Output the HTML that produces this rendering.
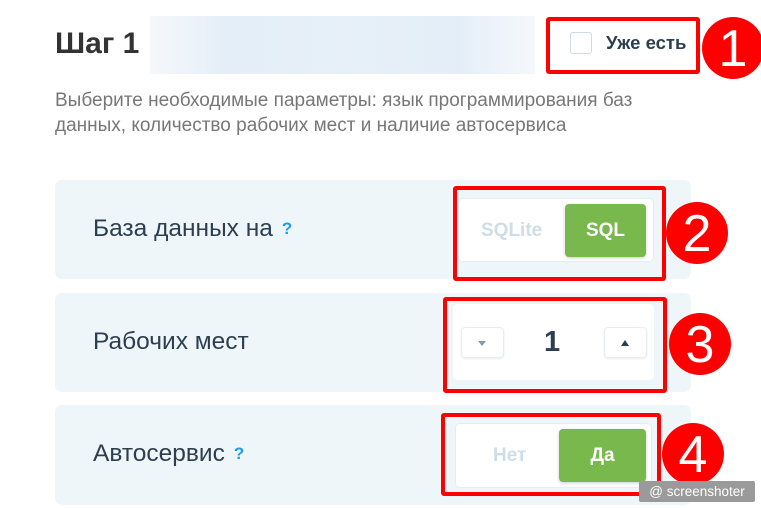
<!DOCTYPE html>
<html><head><meta charset="utf-8"><style>
*{margin:0;padding:0;box-sizing:border-box}
body{width:761px;height:508px;background:#fff;position:relative;overflow:hidden;font-family:"Liberation Sans",Arial,sans-serif}
.a{position:absolute}
.panel{position:absolute;left:55px;width:636px;height:99px;background:#eff6f9;border-radius:7px}
.lbl{position:absolute;left:93px;font-size:24.5px;color:#2c3e50}
.q{color:#1e9be9;font-weight:bold;font-size:17px;margin-left:9px;vertical-align:2px}
.red{position:absolute;border:4px solid #f00;border-radius:3px}
.circ{position:absolute;width:62px;height:62px;border-radius:50%;background:#f00;color:#fff;font-size:52px;text-align:center;line-height:64px}
.wbox{position:absolute;background:#fff;border:1px solid #e3eef4;border-radius:5px}
.green{position:absolute;background:#79b84d;border-radius:4px;color:#fff;font-weight:bold;font-size:19px;text-align:center;box-shadow:0 1px 3px rgba(0,0,0,.2)}
.dis{position:absolute;color:#cfdde8;font-weight:bold;font-size:19px}
.btn{position:absolute;width:43px;height:31px;background:#fff;border:1px solid #e6eef3;border-radius:4px;box-shadow:0 1px 2px rgba(0,0,0,.08)}
</style></head><body>
<div class="a" style="left:55px;top:27px;font-size:30px;font-weight:bold;color:#333">Шаг 1</div>
<div class="a" style="left:150px;top:16px;width:385px;height:58px;background:linear-gradient(90deg,#f5f8fb,#e4eef8 20%,#e7f0f9 50%,#e4eef8 80%,#f5f8fb)"></div>
<div class="a" style="left:55px;top:88px;font-size:19px;line-height:25px;color:#777;white-space:nowrap">Выберите необходимые параметры: язык программирования баз<br>данных, количество рабочих мест и наличие автосервиса</div>

<div class="red" style="left:546px;top:17px;width:154px;height:57px"></div>
<div class="a" style="left:570px;top:32px;width:22px;height:22px;border:1px solid #cfdbe5;border-radius:3px;background:#fff"></div>
<div class="a" style="left:606px;top:32px;font-size:18.5px;font-weight:bold;color:#2c3e50">Уже есть</div>
<div class="circ" style="left:702px;top:17px">1</div>

<div class="panel" style="top:180px"></div>
<div class="lbl" style="top:215px">База данных на<span class="q">?</span></div>
<div class="wbox" style="left:458px;top:198px;width:196px;height:64px"></div>
<div class="dis" style="left:481px;top:220px">SQLite</div>
<div class="green" style="left:565px;top:204px;width:81px;height:53px;line-height:53px">SQL</div>
<div class="red" style="left:453px;top:186px;width:213px;height:95px"></div>
<div class="circ" style="left:666px;top:202px">2</div>

<div class="panel" style="top:293px"></div>
<div class="lbl" style="top:328px">Рабочих мест</div>
<div class="wbox" style="left:453px;top:304px;width:201px;height:76px;border-color:#fff"></div>
<div class="btn" style="left:461px;top:327px"><div class="a" style="left:16px;top:13px;border-left:4px solid transparent;border-right:4px solid transparent;border-top:5px solid #8a99a8"></div></div>
<div class="a" style="left:544px;top:326px;font-size:29px;font-weight:bold;color:#2c3e50">1</div>
<div class="btn" style="left:604px;top:327px"><div class="a" style="left:16px;top:12px;border-left:4px solid transparent;border-right:4px solid transparent;border-bottom:6px solid #2c3e50"></div></div>
<div class="red" style="left:443px;top:297px;width:224px;height:96px"></div>
<div class="circ" style="left:669px;top:313px">3</div>

<div class="panel" style="top:405px;height:100px"></div>
<div class="lbl" style="top:440px">Автосервис<span class="q">?</span></div>
<div class="wbox" style="left:455px;top:423px;width:197px;height:65px"></div>
<div class="dis" style="left:493px;top:445px">Нет</div>
<div class="green" style="left:559px;top:429px;width:87px;height:53px;line-height:53px">Да</div>
<div class="red" style="left:441px;top:413px;width:220px;height:83px"></div>
<div class="circ" style="left:662px;top:423px">4</div>

<div class="a" style="left:639px;top:481px;width:116px;height:21px;background:#9a9a9a;border-radius:2px;color:#fff;font-size:13.5px;line-height:21px;text-align:center">@ screenshoter</div>
</body></html>
